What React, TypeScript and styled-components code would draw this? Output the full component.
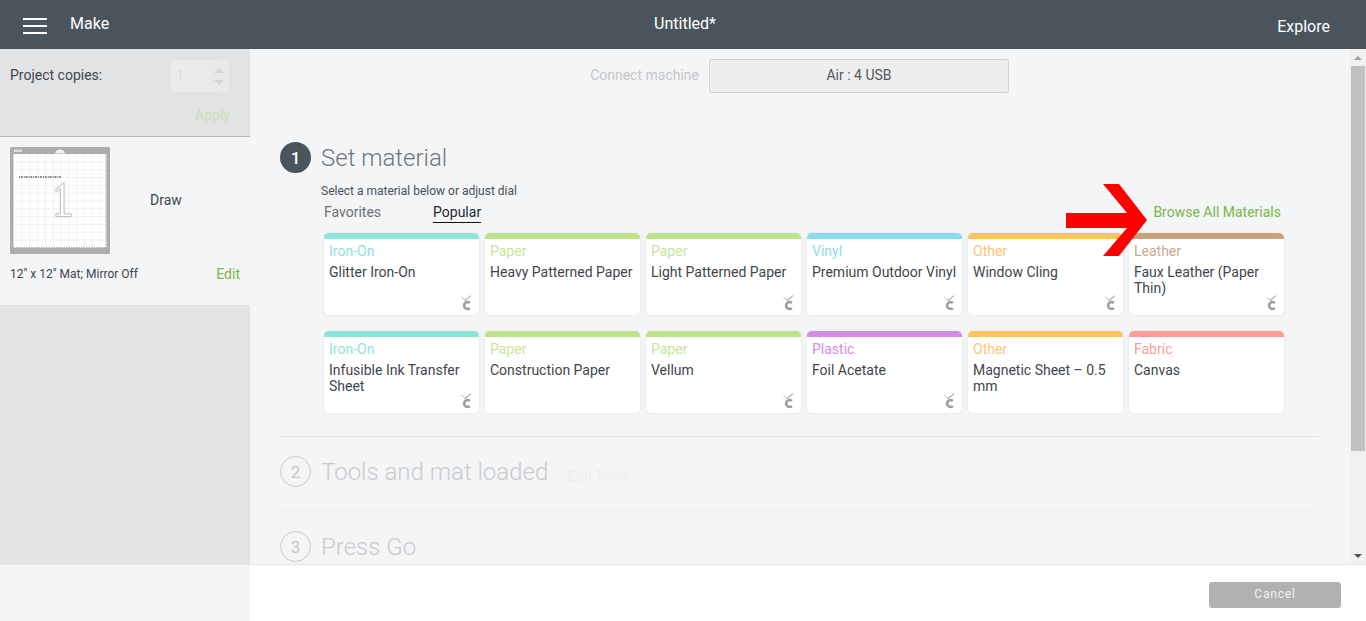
import React from "react";
import styled, { createGlobalStyle } from "styled-components";

const Global = createGlobalStyle`
  html, body { margin: 0; padding: 0; height: 100%; overflow: hidden; background: #f4f5f7; }
  body { font-family: Roboto, "Liberation Sans", sans-serif; color: #3f464c; }
  * { box-sizing: border-box; }
`;

const Page = styled.div`
  width: 1366px; height: 621px; display: flex; flex-direction: column; overflow: hidden;
`;
const Header = styled.header`
  height: 49px; flex: none; background: #4a545c; color: #fff; display: grid;
  grid-template-columns: 1fr auto 1fr; position: relative;
`;
const HeaderLeft = styled.div`
  display: flex; align-items: flex-start; padding: 15px 0 0 23px; gap: 23px; font-size: 16px; line-height: 18px;
`;
const Burger = styled.div`
  width: 24px; display: flex; flex-direction: column; gap: 5px; padding-top: 3px;
`;
const BurgerBar = styled.span`
  display: block; height: 2px; background: #fff;
`;
const Title = styled.div`
  padding: 15px 0 0 4px; font-size: 16px; line-height: 18px;
`;
const HeaderRight = styled.div`
  justify-self: end; padding: 18px 36px 0 0; font-size: 16px; line-height: 18px;
`;

const Body = styled.div`
  flex: 1; display: flex; min-height: 0;
`;
const Sidebar = styled.aside`
  width: 250px; flex: none; display: flex; flex-direction: column; background: #e2e3e4;
`;
const CopiesPanel = styled.div`
  height: 88px; flex: none; border-bottom: 1px solid #b5b6b8; padding: 11px 20px 0 10px; position: relative;
`;
const CopiesRow = styled.div`
  display: flex; justify-content: space-between; align-items: flex-start; font-size: 14px; line-height: 30px; padding-right: 1px;
`;
const Stepper = styled.div`
  width: 58px; height: 32px; background: #eaebec; border-radius: 3px; display: flex; overflow: hidden;
`;
const StepValue = styled.div`
  flex: 1; color: #dadbdc; font-size: 14px; line-height: 32px; padding-left: 5px;
`;
const StepArrows = styled.div`
  width: 20px; background: #e8e9ea; display: flex; flex-direction: column; align-items: center; justify-content: center; gap: 7px;
`;
const Arrow = styled.span<{ $up?: boolean; $color: string; $w: number; $h: number }>`
  width: 0; height: 0; border-left: ${p => p.$w}px solid transparent; border-right: ${p => p.$w}px solid transparent;
  ${p => (p.$up ? `border-bottom: ${p.$h}px solid ${p.$color};` : `border-top: ${p.$h}px solid ${p.$color};`)}
`;
const Apply = styled.div`
  text-align: right; font-size: 14px; line-height: 16px; color: #cfdeb3; margin-top: 15px;
`;
const MatPanel = styled.div`
  height: 168px; flex: none; background: #f4f5f7; padding: 10px 10px 0;
`;
const MatRow = styled.div`
  display: flex; align-items: center; gap: 40px; font-size: 14px;
`;
const MatLabel = styled.span`
  margin-bottom: 2px;
`;
const MatMeta = styled.div`
  display: flex; justify-content: space-between; margin-top: 11px; font-size: 12px; line-height: 18px; align-items: center;
`;
const EditLink = styled.span`
  color: #7ab648; font-size: 14px;
`;
const SideSpacer = styled.div`
  flex: 1;
`;

const Main = styled.main`
  flex: 1; display: flex; min-width: 0;
`;
const Content = styled.div`
  flex: 1; padding: 10px 31px 0 30px; overflow: hidden; min-width: 0;
`;
const MachineRow = styled.div`
  display: flex; align-items: center; padding-left: 310px; gap: 10px; height: 34px;
`;
const MachineLabel = styled.span`
  font-size: 14px; color: #c5c7c9; width: 109px; text-align: right; margin-bottom: 2px;
`;
const MachineSelect = styled.div`
  width: 300px; height: 34px; background: #eeeeee; border: 1px solid #d2d3d5; border-radius: 3px; padding-bottom: 2px;
  display: flex; align-items: center; justify-content: center; font-size: 14px; color: #53595e;
`;
const StepHead = styled.div<{ $top: number }>`
  display: flex; align-items: center; gap: 10px; height: 31px; margin-top: ${p => p.$top}px;
`;
const Circle = styled.div<{ $active?: boolean }>`
  width: 31px; height: 31px; border-radius: 50%; flex: none; display: flex; align-items: center; justify-content: center;
  font-size: 17px; font-weight: ${p => (p.$active ? 500 : 400)};
  background: ${p => (p.$active ? "#4a545c" : "transparent")};
  color: ${p => (p.$active ? "#fff" : "#c4c6c8")};
  border: ${p => (p.$active ? "none" : "1px solid #c9cacc")};
`;
const StepTitle = styled.div<{ $active?: boolean }>`
  font-size: 24px; font-weight: 300; line-height: 30px; color: ${p => (p.$active ? "#6e757b" : "#c9cbcd")};
`;
const EditTools = styled.span`
  font-size: 14px; color: #ecefe6; margin: 8px 0 0 10px;
`;
const Hint = styled.div`
  font-size: 12px; line-height: 14px; margin: 11px 0 0 41px; color: #4a5056;
`;
const TabsRow = styled.div`
  display: flex; align-items: flex-end; justify-content: space-between; margin: 4px 38px 0 44px; height: 21px;
`;
const Tabs = styled.div`
  display: flex; gap: 52px; align-items: flex-start;
`;
const Tab = styled.span<{ $active?: boolean }>`
  font-size: 14px; line-height: 20px; color: ${p => (p.$active ? "#22282d" : "#6a7076")};
  border-bottom: ${p => (p.$active ? "1px solid #111" : "1px solid transparent")};
`;
const Browse = styled.span`
  font-size: 14px; line-height: 20px; color: #7ab648; margin-bottom: 1px;
`;
const Grid = styled.div`
  display: grid; grid-template-columns: repeat(6, 155px); column-gap: 6px; row-gap: 16px; margin: 10px 0 0 44px;
`;
const Card = styled.div<{ $color: string }>`
  height: 82px; background: #fff; border-radius: 5px; border-top: 6px solid ${p => p.$color};
  box-shadow: 0 0 3px rgba(0, 0, 0, 0.08); padding: 4px 5px 0; position: relative;
`;
const Category = styled.div<{ $color: string }>`
  font-size: 14px; line-height: 16px; color: ${p => p.$color};
`;
const Name = styled.div`
  font-size: 14px; line-height: 16px; margin-top: 5px; color: #3f464c;
`;
const CutIcon = styled.svg`
  position: absolute; right: 7px; bottom: 4px; width: 12px; height: 16px;
`;
const Divider = styled.div<{ $top: number; $color: string }>`
  height: 1px; background: ${p => p.$color}; margin-top: ${p => p.$top}px;
`;

const ScrollBar = styled.div`
  width: 16px; flex: none; background: #f1f1f1; display: flex; flex-direction: column; align-items: center; position: relative;
`;
const ScrollBtn = styled.div`
  height: 17px; flex: none; display: flex; align-items: center; justify-content: center;
`;
const ScrollThumb = styled.div`
  width: 14px; height: 385px; flex: none; background: #c1c1c1;
`;
const ScrollTrack = styled.div`
  flex: 1;
`;

const Footer = styled.footer`
  height: 57px; flex: none; display: flex; background: #fff; position: relative;
`;
const FooterSide = styled.div`
  width: 250px; background: #f4f5f7; border-top: 1px solid #e2e3e4;
`;
const FooterMain = styled.div`
  flex: 1; border-top: 1px solid #e3e4e5; display: flex; justify-content: flex-end; padding: 17px 25px 0 0;
`;
const CancelBtn = styled.div`
  width: 132px; height: 26px; background: #b1b1b1; color: #f2f2f2; border-radius: 3px; font-size: 12px;
  letter-spacing: 0.8px; display: flex; align-items: center; justify-content: center; padding-bottom: 2px;
`;
const ArrowOverlay = styled.svg`
  position: absolute; left: 1066px; top: 184px; width: 81px; height: 72px;
`;
const MatSvg = styled.svg`
  width: 100px; height: 107px; flex: none; display: block;
`;

const C = {
  iron: ["#8ce5d6", "#8ee4d6"], paper: ["#bde48a", "#c4e79a"], vinyl: ["#8adcec", "#8fdcec"],
  other: ["#fdc35e", "#fcc578"], leather: ["#c9a17a", "#c9a98c"], plastic: ["#d58be4", "#d58fe0"], fabric: ["#fb9d94", "#f99f98"],
};
type Item = { cat: string; c: string[]; name: string; icon: boolean };
const items: Item[] = [
  { cat: "Iron-On", c: C.iron, name: "Glitter Iron-On", icon: true },
  { cat: "Paper", c: C.paper, name: "Heavy Patterned Paper", icon: false },
  { cat: "Paper", c: C.paper, name: "Light Patterned Paper", icon: true },
  { cat: "Vinyl", c: C.vinyl, name: "Premium Outdoor Vinyl", icon: true },
  { cat: "Other", c: C.other, name: "Window Cling", icon: true },
  { cat: "Leather", c: C.leather, name: "Faux Leather (Paper Thin)", icon: true },
  { cat: "Iron-On", c: C.iron, name: "Infusible Ink Transfer Sheet", icon: true },
  { cat: "Paper", c: C.paper, name: "Construction Paper", icon: false },
  { cat: "Paper", c: C.paper, name: "Vellum", icon: true },
  { cat: "Plastic", c: C.plastic, name: "Foil Acetate", icon: true },
  { cat: "Other", c: C.other, name: "Magnetic Sheet – 0.5 mm", icon: false },
  { cat: "Fabric", c: C.fabric, name: "Canvas", icon: false },
];

const Blade = () => (
  <CutIcon viewBox="0 0 12 16" fill="none">
    <path d="M9.8 8A3.4 3.4 0 1 0 9.8 13" stroke="#9c9ea0" strokeWidth="2.6" />
    <path d="M1.5 2L5 5.4" stroke="#b3b5b7" strokeWidth="1" />
    <path d="M11 .6L4.8 5.8" stroke="#a9abad" strokeWidth="1.2" />
  </CutIcon>
);

const Mat = () => {
  const lines = Array.from({ length: 11 }, (_, i) => 12 + i * 7.8);
  return (
    <MatSvg viewBox="0 0 100 107">
      <rect width="100" height="107" rx="1.5" fill="#adadad" />
      <path d="M45 6.5Q46 2.5 50 2.5Q54 2.5 55 6.5Z" fill="#f2f2f2" />
      <rect x="4" y="2.5" width="8" height="2.5" fill="#dcdcdc" />
      <rect x="3.5" y="7" width="93" height="94" fill="#fff" />
      {lines.map(v => (
        <path key={`v${v}`} d={`M${v} 7V101`} stroke="#ececec" strokeWidth=".7" />
      ))}
      {lines.map(v => (
        <path key={`h${v}`} d={`M3.5 ${v + 3}H96.5`} stroke="#ececec" strokeWidth=".7" />
      ))}
      <path d="M3.5 100.5H96.5" stroke="#adadad" strokeWidth="1" strokeDasharray="1.5 1" />
      <path d="M96 7V101" stroke="#adadad" strokeWidth="1" strokeDasharray="1.5 1" />
      <path d="M9 30H51" stroke="#666" strokeWidth="1.6" strokeDasharray="1 .8 2 1" />
      <path d="M46 42L54 36V67H61V69.5H46V67H50.5V41L46 44.5Z" fill="#fff" stroke="#eeeeee" strokeWidth="3" />
      <path d="M46 42L54 36V67H61V69.5H46V67H50.5V41L46 44.5Z" fill="#fff" stroke="#c4c4c4" strokeWidth="1" />
    </MatSvg>
  );
};

export default function App() {
  return (
    <Page>
      <Global />
      <Header>
        <HeaderLeft>
          <Burger>
            <BurgerBar />
            <BurgerBar />
            <BurgerBar />
          </Burger>
          <span>Make</span>
        </HeaderLeft>
        <Title>Untitled*</Title>
        <HeaderRight>Explore</HeaderRight>
      </Header>
      <Body>
        <Sidebar>
          <CopiesPanel>
            <CopiesRow>
              <span>Project copies:</span>
              <Stepper>
                <StepValue>1</StepValue>
                <StepArrows>
                  <Arrow $up $color="#d3d4d5" $w={5} $h={5} />
                  <Arrow $color="#d3d4d5" $w={5} $h={5} />
                </StepArrows>
              </Stepper>
            </CopiesRow>
            <Apply>Apply</Apply>
          </CopiesPanel>
          <MatPanel>
            <MatRow>
              <Mat />
              <MatLabel>Draw</MatLabel>
            </MatRow>
            <MatMeta>
              <span>12" x 12" Mat; Mirror Off</span>
              <EditLink>Edit</EditLink>
            </MatMeta>
          </MatPanel>
          <SideSpacer />
        </Sidebar>
        <Main>
          <Content>
            <MachineRow>
              <MachineLabel>Connect machine</MachineLabel>
              <MachineSelect>Air : 4 USB</MachineSelect>
            </MachineRow>
            <StepHead $top={49}>
              <Circle $active>1</Circle>
              <StepTitle $active>Set material</StepTitle>
            </StepHead>
            <Hint>Select a material below or adjust dial</Hint>
            <TabsRow>
              <Tabs>
                <Tab>Favorites</Tab>
                <Tab $active>Popular</Tab>
              </Tabs>
              <Browse>Browse All Materials</Browse>
            </TabsRow>
            <Grid>
              {items.map((it, i) => (
                <Card key={i} $color={it.c[0]}>
                  <Category $color={it.c[1]}>{it.cat}</Category>
                  <Name>{it.name}</Name>
                  {it.icon && <Blade />}
                </Card>
              ))}
            </Grid>
            <Divider $top={23} $color="#e3e4e6" />
            <StepHead $top={19}>
              <Circle>2</Circle>
              <StepTitle>Tools and mat loaded</StepTitle>
              <EditTools>Edit Tools</EditTools>
            </StepHead>
            <Divider $top={23} $color="#eeeff1" />
            <StepHead $top={20}>
              <Circle>3</Circle>
              <StepTitle>Press Go</StepTitle>
            </StepHead>
          </Content>
          <ScrollBar>
            <ScrollBtn>
              <Arrow $up $color="#a3a3a3" $w={4} $h={4} />
            </ScrollBtn>
            <ScrollThumb />
            <ScrollTrack />
            <ScrollBtn>
              <Arrow $color="#505050" $w={4} $h={4} />
            </ScrollBtn>
          </ScrollBar>
        </Main>
      </Body>
      <Footer>
        <FooterSide />
        <FooterMain>
          <CancelBtn>Cancel</CancelBtn>
        </FooterMain>
      </Footer>
      <ArrowOverlay viewBox="0 0 81 72">
        <path d="M0 29H61L37 0H53L81 36L53 72H37L61 44H0Z" fill="#fe0000" />
      </ArrowOverlay>
    </Page>
  );
}
